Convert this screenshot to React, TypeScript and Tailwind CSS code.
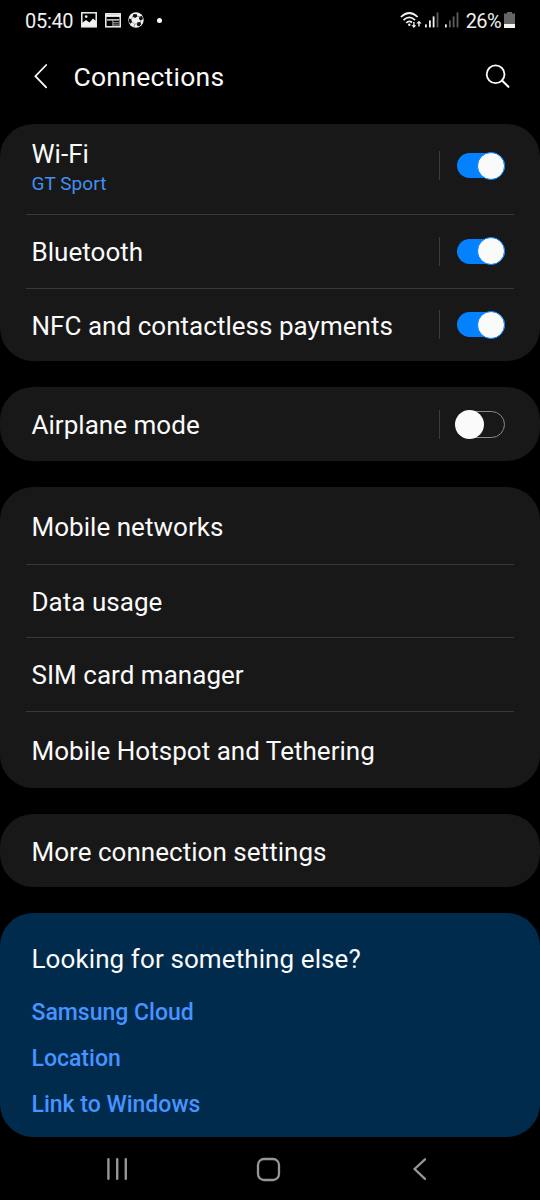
import type { ReactNode } from "react";

function ImageIcon() {
  return (
    <svg width="16" height="16" viewBox="0 0 16 16" fill="none">
      <rect x="0.8" y="0.8" width="14.4" height="14" stroke="#f2f2f2" strokeWidth="1.5" />
      <path d="M1 14.5V11l4-3 3.5 2.5L12 6.5 15 9v5.5z" fill="#f2f2f2" />
      <circle cx="5.2" cy="4.6" r="1.3" fill="#f2f2f2" />
    </svg>
  );
}

function NewsIcon() {
  return (
    <svg width="16" height="15" viewBox="0 0 16 15" fill="none">
      <rect x="0.8" y="0.8" width="14.4" height="13" stroke="#f2f2f2" strokeWidth="1.5" />
      <path d="M1 2.6h14" stroke="#f2f2f2" strokeWidth="2.6" />
      <path d="M2 6.9h12" stroke="#f2f2f2" strokeWidth="1.3" />
      <path d="M8 9.8h6M8 12h6M7.9 7v6.5" stroke="#b5b5b5" strokeWidth="1" />
    </svg>
  );
}

function BallIcon() {
  return (
    <svg width="16" height="16" viewBox="0 0 16 16" fill="none">
      <circle cx="8" cy="8" r="7.7" fill="#f2f2f2" />
      <path d="M5.6 2l3.2.3.6 2.1-2.4 1.7-2.6-1.6zM11.5 4.4l2.6-.5.9 3-2.2 1.6-1.9-1.5zM1.2 6.4l2.2 0.8.6 3-1.7 1.5-1.5-2zM9.4 10.2l2.9-.2.9 2.2-2 2.2-2.4-1.2z" fill="#111" />
      <path d="M4 9.8l2.6 2.4 2.6-.6M6.6 12.2l-.6 2.6M9.2 4.2l2.2.6M3.4 7.2l1.4-2.6M12.6 8.3l-.4 2" stroke="#777" strokeWidth="0.7" />
    </svg>
  );
}

function WifiStatusIcon() {
  return (
    <svg width="22" height="17" viewBox="0 0 22 17" fill="none" stroke="#f2f2f2">
      <path d="M0.9 5Q9.3-3 17.7 5" strokeWidth="1.7" />
      <path d="M3.5 8.1Q9.3 2.6 15.1 8.1" strokeWidth="1.7" />
      <path d="M6.2 10.8Q9.3 8 12.1 10.5" strokeWidth="1.7" />
      <circle cx="9.3" cy="12.7" r="1.2" fill="#f2f2f2" stroke="none" />
      <path d="M14.6 10v3.2h1.7L13.9 16l-2.4-2.8h1.7V10zM18.3 14.4v-2.8h-1.9L19 8.8l2.6 2.8h-1.9v2.8z" fill="#f2f2f2" stroke="none" />
    </svg>
  );
}

function SignalIcon({ level }: { level: number }) {
  const bars = [
    { x: 0, height: 3 },
    { x: 4, height: 7 },
    { x: 7.7, height: 11 },
    { x: 11.6, height: 15 },
  ];
  return (
    <svg width="14" height="16" viewBox="0 0 14 16">
      {bars.map((bar, i) => (
        <rect
          key={bar.x}
          x={bar.x}
          y={15.4 - bar.height}
          width="1.8"
          height={bar.height}
          fill={i < level ? "#f2f2f2" : "#5c5c5c"}
        />
      ))}
    </svg>
  );
}

function BatteryIcon() {
  return (
    <svg width="11" height="16" viewBox="0 0 11 16">
      <path d="M3 0h5v1.5h3V16H0V1.5h3z" fill="#656565" />
      <path d="M0 12h11v4H0z" fill="#f5f5f5" />
    </svg>
  );
}

function StatusBar() {
  return (
    <div className="flex h-10 items-center pl-[25px] pr-[25px] text-[20px] text-[#f0f0f0]">
      <span className="w-[56px] pt-px tracking-[-0.3px]">05:40</span>
      <div className="flex items-center gap-[7.5px]">
        <ImageIcon />
        <NewsIcon />
        <BallIcon />
        <span className="ml-[5px] size-[5px] rounded-full bg-white" />
      </div>
      <div className="ml-auto flex items-center">
        <WifiStatusIcon />
        <span className="ml-[3px]"><SignalIcon level={3} /></span>
        <span className="ml-[6px]"><SignalIcon level={1} /></span>
        <span className="ml-[7px] mr-[3px] pt-px tracking-[-0.6px]">26%</span>
        <BatteryIcon />
      </div>
    </div>
  );
}

function Header() {
  return (
    <header className="flex h-[84px] items-start pl-[33px] pr-[30px] pt-[20px]">
      <svg className="mt-[3px]" width="16" height="26" viewBox="0 0 16 26" fill="none">
        <path d="M13.2 2L2.4 13.2 13.2 24.4" stroke="#fafafa" strokeWidth="1.8" strokeLinecap="round" />
      </svg>
      <h1 className="-mt-px ml-[24.5px] text-[26.5px] leading-[36px] tracking-[0.25px] text-[#fafafa]">Connections</h1>
      <svg className="ml-auto mt-[4px]" width="25" height="25" viewBox="0 0 25 25" fill="none" stroke="#fafafa">
        <circle cx="10.6" cy="10.3" r="8.9" strokeWidth="1.8" />
        <path d="M17 16.6l6.4 6.2" strokeWidth="2.1" strokeLinecap="round" />
      </svg>
    </header>
  );
}

function Toggle({ on }: { on: boolean }) {
  return (
    <button role="switch" aria-checked={on} className="flex h-[29px] w-[50px] items-center">
      {on ? (
        <span className="ml-[2px] flex h-[25px] w-[48px] items-center justify-end rounded-full bg-[#0381fe]">
          <span className="size-[28px] shrink-0 rounded-full border border-[#0381fe] bg-[#fafafa]" />
        </span>
      ) : (
        <span className="ml-[2px] flex h-[27px] w-[48px] items-center rounded-full border border-[#8a8a8a]">
          <span className="-ml-[3px] size-[29px] shrink-0 rounded-full bg-[#fafafa]" />
        </span>
      )}
    </button>
  );
}

interface RowProps {
  label: string;
  sub?: string;
  on?: boolean;
  className: string;
}

function Row({ label, sub, on, className }: RowProps) {
  return (
    <div className={`mx-[26px] flex border-[#393939] pl-[5.5px] ${sub ? "items-start" : "items-center"} ${className}`}>
      <div className={sub ? "pt-[14px]" : "pt-px"}>
        <p className="text-[26px] leading-[32px] tracking-[0.03px] text-[#fafafa]">{label}</p>
        {sub && <p className="text-[19px] leading-[28px] tracking-[0.05px] text-[#4390f2]">{sub}</p>}
      </div>
      {on !== undefined && (
        <div className={`ml-auto mr-[9px] flex items-center ${sub ? "pt-[27px]" : on ? "pb-px" : ""}`}>
          <span className="mr-[15px] h-[29px] w-px bg-[#3c3c3c]" />
          <Toggle on={on} />
        </div>
      )}
    </div>
  );
}

function Card({ children }: { children: ReactNode }) {
  return <section className="rounded-[33px] bg-[#181818]">{children}</section>;
}

const links = ["Samsung Cloud", "Location", "Link to Windows"];

export default function App() {
  return (
    <div className="flex h-[1200px] w-[540px] flex-col overflow-hidden bg-black font-[Roboto,sans-serif]">
      <StatusBar />
      <Header />
      <main className="flex flex-col gap-[26px]">
        <Card>
          <Row label="Wi-Fi" sub="GT Sport" on className="h-[91px] border-b" />
          <Row label="Bluetooth" on className="h-[74px] border-b" />
          <Row label="NFC and contactless payments" on className="h-[72px]" />
        </Card>
        <Card>
          <Row label="Airplane mode" on={false} className="h-[74px]" />
        </Card>
        <Card>
          <Row label="Mobile networks" className="h-[78px] border-b pt-px" />
          <Row label="Data usage" className="h-[73px] border-b" />
          <Row label="SIM card manager" className="h-[74px] border-b" />
          <Row label="Mobile Hotspot and Tethering" className="h-[76px]" />
        </Card>
        <Card>
          <Row label="More connection settings" className="h-[73px] pt-px" />
        </Card>
        <section className="h-[224px] rounded-[33px] bg-[#002b4d] pl-[31.5px] pt-[30px]">
          <h2 className="text-[26px] leading-[32px] tracking-[0.1px] text-[#fafafa]">Looking for something else?</h2>
          <ul className="mt-[15px] text-[23px] font-medium leading-[46px] text-[#4793ff]">
            {links.map((link) => (
              <li key={link}>{link}</li>
            ))}
          </ul>
        </section>
      </main>
      <nav className="flex flex-1 items-center pt-px">
        <svg className="ml-[106px]" width="22" height="24" viewBox="0 0 22 24" stroke="#969696" strokeWidth="2.4" strokeLinecap="round">
          <path d="M2.4 2.2v19.6M11.2 2.2v19.6M19.8 2.2v19.6" />
        </svg>
        <svg className="ml-[127.5px]" width="25" height="25" viewBox="0 0 25 25" fill="none">
          <rect x="2" y="2" width="21" height="21" rx="6" stroke="#969696" strokeWidth="2.3" />
        </svg>
        <svg className="ml-[131px]" width="16" height="24" viewBox="0 0 16 24" fill="none">
          <path d="M13 2.3L2.6 12 13 21.9" stroke="#969696" strokeWidth="2.3" strokeLinecap="round" />
        </svg>
      </nav>
    </div>
  );
}
